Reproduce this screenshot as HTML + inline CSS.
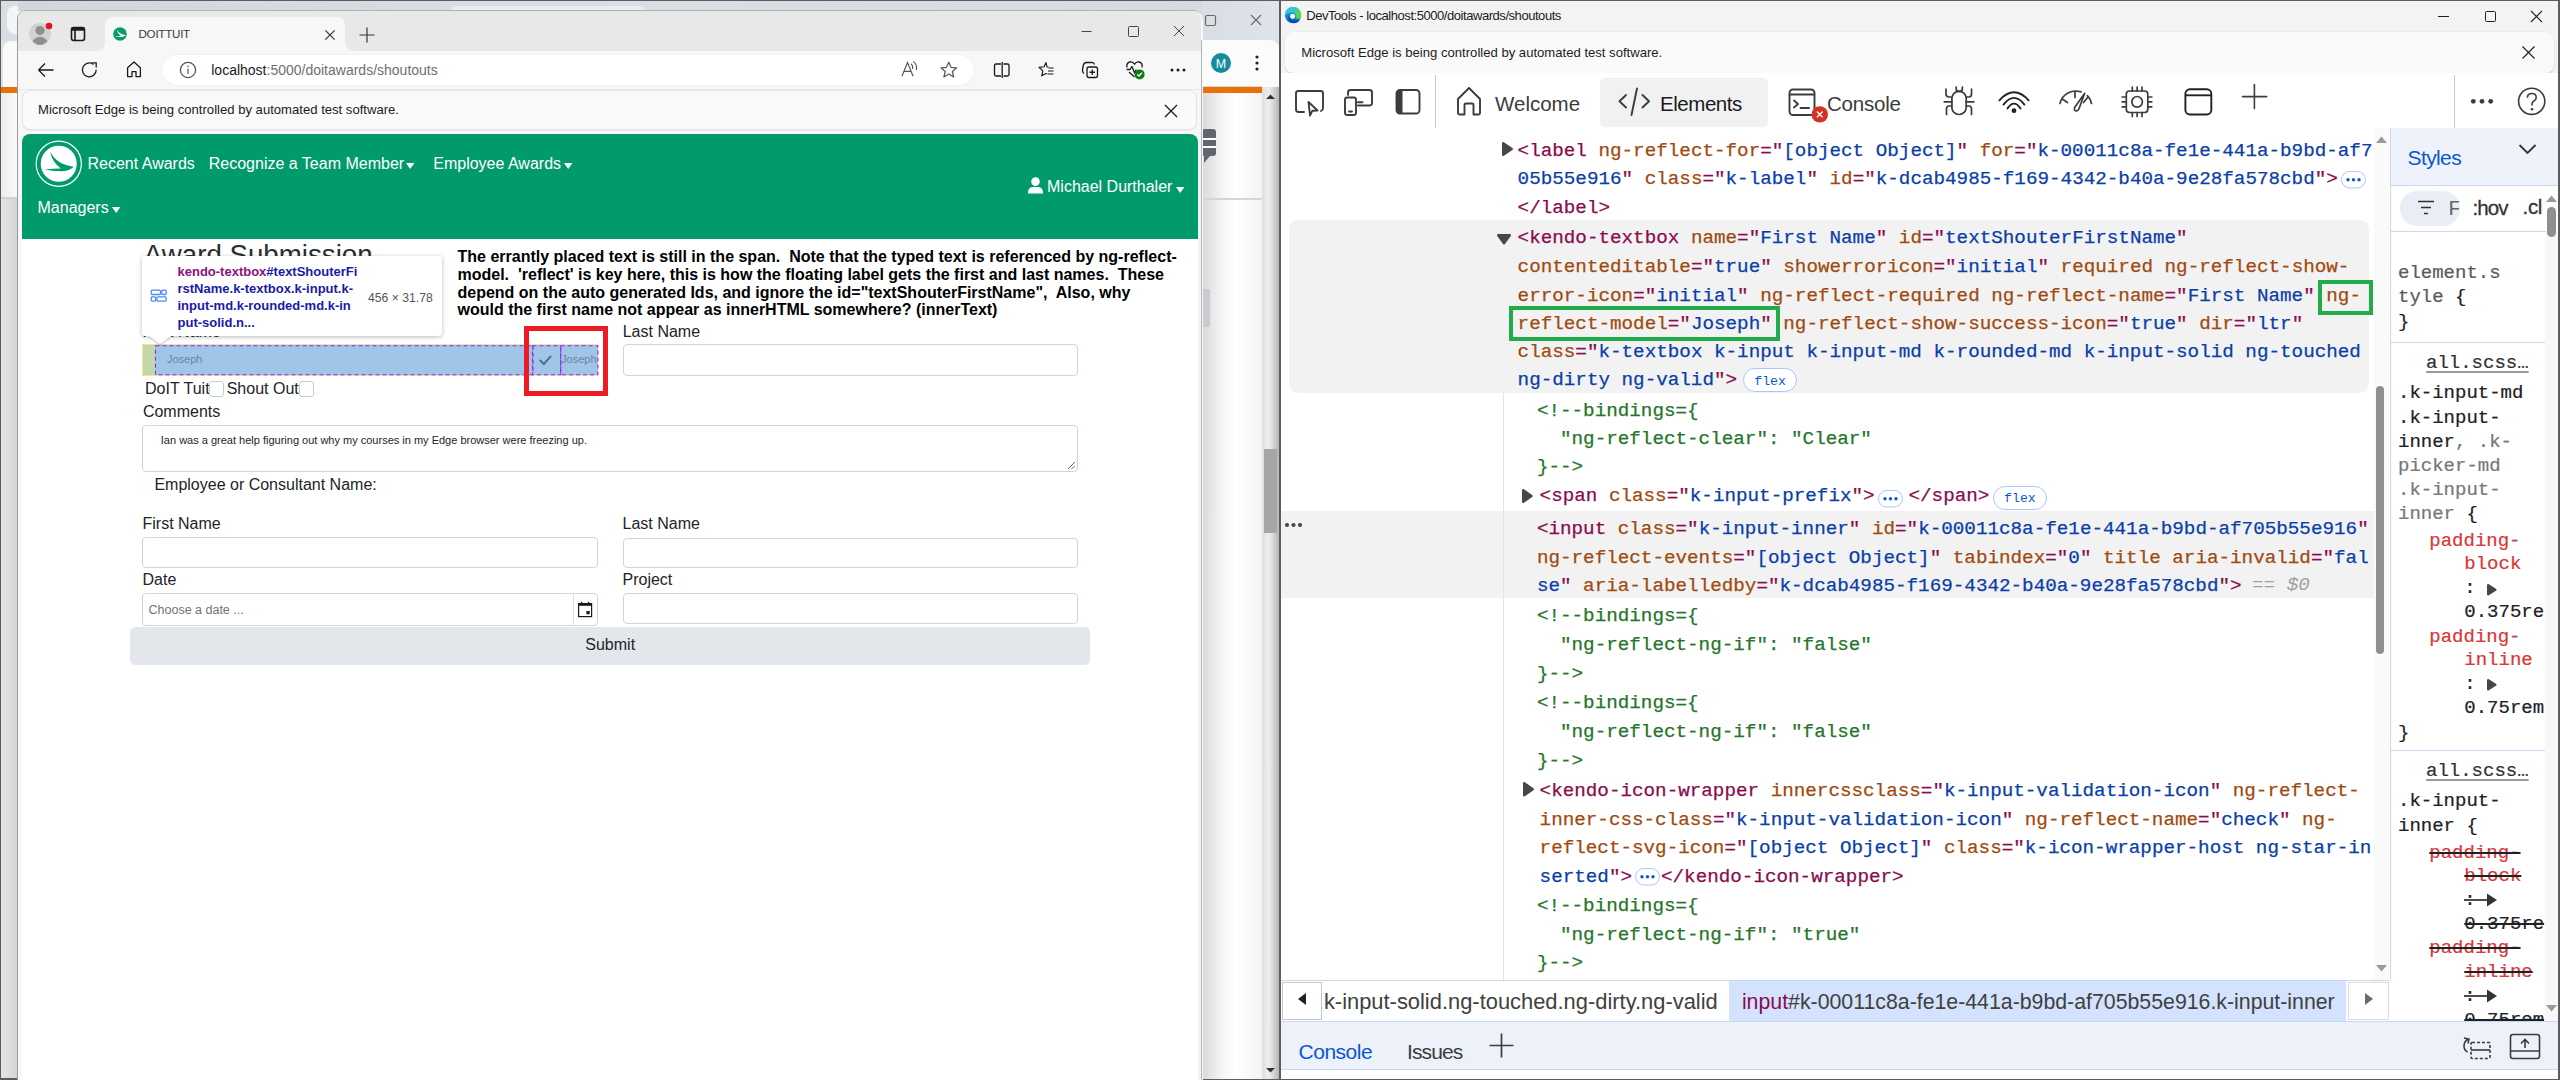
<!DOCTYPE html>
<html><head><meta charset="utf-8">
<style>
*{box-sizing:border-box;margin:0;padding:0}
html,body{width:2560px;height:1080px;overflow:hidden}
body{position:relative;background:#d9dde4;font-family:"Liberation Sans",sans-serif;color:#000}
.a{position:absolute}
.pre{white-space:pre}
svg.a{overflow:visible}
</style></head><body>
<div class="a" style="left:0px;top:0px;width:2560px;height:1px;background:#5c5c5c;"></div>
<div class="a" style="left:0px;top:0px;width:1px;height:1080px;background:#5c5c5c;"></div>
<div class="a" style="left:1px;top:1px;width:17px;height:1079px;background:linear-gradient(90deg,#e4e4e4,#d3d3d3);"></div>
<div class="a" style="left:1px;top:1px;width:17px;height:40px;background:#d9dde4;"></div>
<div class="a" style="left:7px;top:6px;width:30px;height:28px;background:#f3f4f6;border-radius:8px"></div>
<div class="a" style="left:3px;top:41px;width:20px;height:46px;background:#fafafa;border-radius:8px 0 0 0"></div>
<div class="a" style="left:1px;top:87px;width:17px;height:6px;background:#e8710a;"></div>
<div class="a" style="left:1px;top:93px;width:17px;height:104px;background:linear-gradient(90deg,#ececec,#fafafa);"></div>
<div class="a" style="left:1px;top:197px;width:17px;height:2px;background:#cfd3d8;"></div>
<div class="a" style="left:0px;top:1078px;width:18px;height:2px;background:#5c5c5c;"></div>
<div class="a" style="left:18px;top:1px;width:1262px;height:10px;background:linear-gradient(90deg,#d2d7df,#dadfe6 50%,#d5dae2);"></div>
<div class="a" style="left:451px;top:6px;width:194px;height:5px;background:#ececec;border-radius:5px 5px 0 0"></div>
<div class="a" style="left:1202px;top:1px;width:78px;height:40px;background:linear-gradient(90deg,#d9dde4,#dfe3ea);"></div>
<div class="a" style="left:1202px;top:40px;width:78px;height:47px;background:#fbfbfb;border-top-right-radius:10px"></div>
<div class="a" style="left:1202px;top:86px;width:60px;height:1px;background:#d9d9d9;"></div>
<div class="a" style="left:1202px;top:87px;width:60px;height:6px;background:#e8710a;"></div>
<div class="a" style="left:1202px;top:93px;width:60px;height:987px;background:linear-gradient(90deg,#d9d9d9 0%,#f6f6f6 35%,#ffffff 55%,#f3f3f3 100%);"></div>
<div class="a" style="left:1262px;top:87px;width:17px;height:993px;background:linear-gradient(90deg,#dedede 0%,#eeeeee 40%,#c9c9c9 80%,#b2b2b2 100%);"></div>
<div class="a" style="left:1264px;top:449px;width:13px;height:84px;background:#a6a6a6;"></div>
<div class="a" style="left:1202px;top:198px;width:60px;height:2px;background:#d2d5da;"></div>
<div class="a" style="left:1202px;top:289px;width:8px;height:38px;background:#c9ccd0;"></div>
<svg class="a" style="left:1202px;top:1px;" width="78" height="40" viewBox="0 0 78 40"><rect x="3.5" y="14.5" width="10" height="10" rx="1.5" fill="none" stroke="#6a6a6a" stroke-width="1.2"/><path d="M49 14 L59 24 M59 14 L49 24" stroke="#6a6a6a" stroke-width="1.2"/></svg>
<svg class="a" style="left:1202px;top:40px;" width="78" height="47" viewBox="0 0 78 47"><circle cx="19" cy="23" r="10" fill="#138d9e"/><text x="19" y="28" font-family="Liberation Sans" font-size="12.5" fill="#fff" text-anchor="middle">M</text><circle cx="55" cy="17" r="1.6" fill="#222"/><circle cx="55" cy="23" r="1.6" fill="#222"/><circle cx="55" cy="29" r="1.6" fill="#222"/></svg>
<svg class="a" style="left:1262px;top:87px;" width="17" height="20" viewBox="0 0 17 20"><path d="M4 12 L8.5 7.5 L13 12 Z" fill="#333"/></svg>
<svg class="a" style="left:1262px;top:1060px;" width="17" height="20" viewBox="0 0 17 20"><path d="M4 8 L8.5 12.5 L13 8 Z" fill="#333"/></svg>
<svg class="a" style="left:1202px;top:126px;" width="20" height="40" viewBox="0 0 20 40"><rect x="0" y="3" width="14" height="27" rx="3" fill="#5f6670"/><rect x="0" y="12" width="14" height="2" fill="#fff"/><rect x="0" y="20" width="14" height="2" fill="#fff"/><path d="M2 30 L2 37 L8 30 Z" fill="#5f6670"/></svg>
<div class="a" style="left:1279px;top:0px;width:2px;height:1080px;background:#5e5e5e;"></div>
<div class="a" style="left:1202px;top:1079px;width:78px;height:1px;background:#5e5e5e;"></div>
<div class="a" style="left:17px;top:9.5px;width:1186px;height:1070.5px;background:#f7f7f7;border-left:1px solid #9a9a9a;border-top:1px solid #aeb2b8;border-top-left-radius:9px;border-top-right-radius:9px"></div>
<div class="a" style="left:18px;top:11px;width:1183px;height:40px;background:#e8e8e8;border-top-left-radius:8px;border-top-right-radius:8px"></div>
<div class="a" style="left:105px;top:17px;width:240px;height:34px;background:#f7f7f7;border-radius:8px 8px 0 0"></div>
<svg class="a" style="left:95px;top:41px;" width="10" height="10" viewBox="0 0 10 10"><path d="M0 10 Q10 10 10 0 L10 10 Z" fill="#f7f7f7"/></svg>
<svg class="a" style="left:345px;top:41px;" width="10" height="10" viewBox="0 0 10 10"><path d="M10 10 Q0 10 0 0 L0 10 Z" fill="#f7f7f7"/></svg>
<svg class="a" style="left:26px;top:20px;" width="30" height="30" viewBox="0 0 30 30"><circle cx="14" cy="14" r="11" fill="#d2d2d2"/><circle cx="14" cy="10.5" r="4.6" fill="#8f8f8f"/><path d="M6.5 21 Q14 12.5 21.5 21 Q18 25 14 25 Q10 25 6.5 21 Z" fill="#8f8f8f"/><circle cx="23" cy="6" r="3.3" fill="#e81123"/></svg>
<svg class="a" style="left:70px;top:26px;" width="18" height="18" viewBox="0 0 18 18"><rect x="1.5" y="1.5" width="13" height="13" rx="2.2" fill="none" stroke="#1a1a1a" stroke-width="1.6"/><rect x="1.5" y="1.5" width="13" height="3.2" fill="#1a1a1a"/><rect x="4.2" y="3" width="1.6" height="11.5" fill="#1a1a1a"/></svg>
<svg class="a" style="left:112px;top:26px;" width="17" height="17" viewBox="0 0 17 17"><circle cx="8" cy="8" r="6.8" fill="#079a6b"/><path transform="translate(8,8) scale(0.4) translate(-24.75,-24.75)" d="M16.3 12.7 Q22.9 25.8 39.9 27.7 Q34 32.5 27 32.2 Q18 32 11 30.4 Q19 29.8 26.8 29.6 Q17.45 21.85 16.3 12.7 Z" fill="#fff"/></svg>
<div class="a pre" style="left:138.50px;top:27.94px;font:normal 11.6px/11.6px 'Liberation Sans';color:#3a3a3a;letter-spacing:-0.25px;">DOITTUIT</div>
<svg class="a" style="left:320px;top:25px;" width="20" height="20" viewBox="0 0 20 20"><path d="M5.3 5.3 L14.7 14.7 M14.7 5.3 L5.3 14.7" stroke="#333" stroke-width="1.2"/></svg>
<svg class="a" style="left:356px;top:24px;" width="22" height="22" viewBox="0 0 22 22"><path d="M11 3.5 V18.5 M3.5 11 H18.5" stroke="#333" stroke-width="1.2"/></svg>
<svg class="a" style="left:1075px;top:20px;" width="24" height="24" viewBox="0 0 24 24"><path d="M6.5 11.5 H16.5" stroke="#444" stroke-width="1"/></svg>
<svg class="a" style="left:1121px;top:20px;" width="24" height="24" viewBox="0 0 24 24"><rect x="7.5" y="6.5" width="10" height="10" rx="1" fill="none" stroke="#444" stroke-width="1"/></svg>
<svg class="a" style="left:1167px;top:20px;" width="24" height="24" viewBox="0 0 24 24"><path d="M7 6 L17 16 M17 6 L7 16" stroke="#444" stroke-width="1"/></svg>
<svg class="a" style="left:36px;top:60px;" width="20" height="20" viewBox="0 0 20 20"><path d="M2.5 10 H17.5 M2.5 10 L9 3.5 M2.5 10 L9 16.5" fill="none" stroke="#1a1a1a" stroke-width="1.3"/></svg>
<svg class="a" style="left:80px;top:60px;" width="20" height="20" viewBox="0 0 20 20"><path d="M16.2 9.8 A6.9 6.9 0 1 1 13.5 4.4" fill="none" stroke="#1a1a1a" stroke-width="1.3"/><path d="M11.5 2.8 L16.2 2.8 L16.2 7.6" fill="none" stroke="#1a1a1a" stroke-width="1.3"/></svg>
<svg class="a" style="left:124px;top:59px;" width="20" height="20" viewBox="0 0 20 20"><path d="M3.6 17.6 V8.8 L10 2.9 L16.4 8.8 V17.6 H12 V12.6 H8 V17.6 Z" fill="none" stroke="#1a1a1a" stroke-width="1.3" stroke-linejoin="round"/></svg>
<div class="a" style="left:162px;top:55px;width:812px;height:30px;background:#ffffff;border-radius:15px;box-shadow:0 0 0 0.5px #ececec"></div>
<svg class="a" style="left:177px;top:59px;" width="22" height="22" viewBox="0 0 22 22"><circle cx="11" cy="11" r="7.6" fill="none" stroke="#555" stroke-width="1.3"/><rect x="10.3" y="9.6" width="1.5" height="5.4" fill="#777"/><circle cx="11" cy="7.3" r="0.9" fill="#777"/></svg>
<div class="a pre" style="left:211.25px;top:63.10px;font:normal 14px/14px 'Liberation Sans';color:#000;"><span style="color:#1b1b1b">localhost</span><span style="color:#707070">:5000/doitawards/shoutouts</span></div>
<svg class="a" style="left:898px;top:58px;" width="24" height="22" viewBox="0 0 24 22"><path d="M3.9 18.2 L9.5 4.5 L15.1 18.2 M5.9 13.4 H13.1" fill="none" stroke="#555" stroke-width="1.15"/><path d="M12.8 5.6 Q15.3 7.6 14.6 11 M15.3 3.4 Q19.6 6.8 18.3 12" fill="none" stroke="#555" stroke-width="1.1"/></svg>
<svg class="a" style="left:938px;top:60px;" width="22" height="20" viewBox="0 0 22 20"><path d="M10.8 2.2 L13.1 7.3 L18.6 7.8 L14.4 11.5 L15.7 17 L10.8 14.1 L5.9 17 L7.2 11.5 L3 7.8 L8.5 7.3 Z" fill="none" stroke="#555" stroke-width="1.2" stroke-linejoin="round"/></svg>
<svg class="a" style="left:992px;top:60px;" width="20" height="20" viewBox="0 0 20 20"><path d="M9 4 H4 Q2.5 4 2.5 5.5 V14.5 Q2.5 16 4 16 H9 M11.5 4 H15.5 Q17 4 17 5.5 V14.5 Q17 16 15.5 16 H11.5" fill="none" stroke="#1a1a1a" stroke-width="1.3"/><path d="M10.2 2 V18" stroke="#1a1a1a" stroke-width="1.3"/></svg>
<svg class="a" style="left:1036px;top:60px;" width="20" height="20" viewBox="0 0 20 20"><path d="M12.6 7 L11 7 L10 2.5 L8.1 6.8 L3 7.4 L6.8 10.8 L5.8 15.8 L9.9 13.5 L10.8 14" fill="none" stroke="#1a1a1a" stroke-width="1.15" stroke-linejoin="round"/><path d="M12.5 8 H17.5 M12 11 H17.5 M11.5 14 H17.5" stroke="#1a1a1a" stroke-width="1.15"/></svg>
<svg class="a" style="left:1080px;top:60px;" width="20" height="20" viewBox="0 0 20 20"><path d="M4 13.5 Q2 12 2.6 9 L3.4 5 Q4 2.5 6.5 2.5 L12 2.4 Q14 2.5 14.5 4.5" fill="none" stroke="#1a1a1a" stroke-width="1.3"/><rect x="7" y="7" width="10.5" height="10.5" rx="2" fill="none" stroke="#1a1a1a" stroke-width="1.3"/><path d="M12.25 9.5 V15 M9.5 12.25 H15" stroke="#1a1a1a" stroke-width="1.3"/></svg>
<svg class="a" style="left:1124px;top:59px;" width="22" height="22" viewBox="0 0 22 22"><path d="M3 8.5 Q2 4 6 3 Q9 2.5 10.5 5.3 Q12 2.5 15 3 Q19 4 18 8.5 M2.5 10.5 H6 L8 7.5 L10.5 14 L12.3 10.5 M5 13 L10.5 18" fill="none" stroke="#1a1a1a" stroke-width="1.3" stroke-linejoin="round"/><circle cx="15.6" cy="15.4" r="5" fill="#107c10"/><path d="M13.3 15.5 L15 17 L18 13.8" fill="none" stroke="#fff" stroke-width="1.3"/></svg>
<svg class="a" style="left:1168px;top:64px;" width="20" height="12" viewBox="0 0 20 12"><circle cx="4" cy="6" r="1.5" fill="#1a1a1a"/><circle cx="10" cy="6" r="1.5" fill="#1a1a1a"/><circle cx="16" cy="6" r="1.5" fill="#1a1a1a"/></svg>
<div class="a" style="left:18px;top:89px;width:1183px;height:1px;background:#e9e9e9;"></div>
<div class="a" style="left:22px;top:89.5px;width:1175px;height:40.5px;background:#fafafa;border-radius:8px;border:1px solid #e4e4e4;box-shadow:0 1px 1px rgba(0,0,0,0.06)"></div>
<div class="a pre" style="left:38.00px;top:102.86px;font:normal 13.1px/13.1px 'Liberation Sans';color:#1c1c1c;">Microsoft Edge is being controlled by automated test software.</div>
<svg class="a" style="left:1160px;top:100px;" width="22" height="22" viewBox="0 0 22 22"><path d="M5 5 L17 17 M17 5 L5 17" stroke="#1a1a1a" stroke-width="1.3"/></svg>
<div class="a" style="left:1198px;top:130px;width:4px;height:950px;background:#f4f4f4;"></div>
<div class="a" style="left:1201px;top:40px;width:1px;height:1040px;background:#b5b5b5;"></div>
<div class="a" style="left:22px;top:134px;width:1176px;height:946px;background:#ffffff;border-top-left-radius:8px;border-top-right-radius:8px"></div>
<div class="a" style="left:22px;top:134px;width:1176px;height:105px;background:#019a6b;border-top-left-radius:8px;border-top-right-radius:8px"></div>
<svg class="a" style="left:34px;top:139px;" width="50" height="50" viewBox="0 0 50 50"><circle cx="24.75" cy="24.75" r="22.6" fill="none" stroke="#fff" stroke-width="1.2"/><circle cx="24.75" cy="24.75" r="18" fill="#fff"/><path d="M16.3 12.7 Q22.9 25.8 39.9 27.7 Q34 32.5 27 32.2 Q18 32 11 30.4 Q19 29.8 26.8 29.6 Q17.45 21.85 16.3 12.7 Z" fill="#019a6b"/></svg>
<div class="a pre" style="left:87.50px;top:155.60px;font:normal 16px/16px 'Liberation Sans';color:#ffffff;">Recent Awards</div>
<div class="a pre" style="left:208.75px;top:155.60px;font:normal 16px/16px 'Liberation Sans';color:#ffffff;">Recognize a Team Member</div>
<svg class="a" style="left:405.5px;top:163px;" width="9.4" height="7" viewBox="0 0 9.4 7"><path d="M0 0 H8.4 L4.2 6 Z" fill="#fff"/></svg>
<div class="a pre" style="left:433.25px;top:155.60px;font:normal 16px/16px 'Liberation Sans';color:#ffffff;">Employee Awards</div>
<svg class="a" style="left:563.75px;top:163px;" width="9.4" height="7" viewBox="0 0 9.4 7"><path d="M0 0 H8.4 L4.2 6 Z" fill="#fff"/></svg>
<svg class="a" style="left:1027px;top:177px;" width="18" height="18" viewBox="0 0 18 18"><circle cx="8.5" cy="4.6" r="4.3" fill="#fff"/><path d="M1 16.5 Q1 10 5.5 10 H11.5 Q16 10 16 16.5 Z" fill="#fff"/></svg>
<div class="a pre" style="left:1047.00px;top:179.00px;font:normal 16px/16px 'Liberation Sans';color:#ffffff;">Michael Durthaler</div>
<svg class="a" style="left:1175.5px;top:186.5px;" width="9.4" height="7" viewBox="0 0 9.4 7"><path d="M0 0 H8.4 L4.2 6 Z" fill="#fff"/></svg>
<div class="a pre" style="left:37.50px;top:200.20px;font:normal 16px/16px 'Liberation Sans';color:#ffffff;">Managers</div>
<svg class="a" style="left:112.2px;top:207px;" width="9.4" height="7" viewBox="0 0 9.4 7"><path d="M0 0 H8.4 L4.2 6 Z" fill="#fff"/></svg>
<div class="a pre" style="left:143.80px;top:240.96px;font:normal 27.7px/27.7px 'Liberation Sans';color:#2a2d31;">Award Submission</div>
<div class="a pre" style="left:457.50px;top:249.40px;font:bold 16px/16px 'Liberation Sans';color:#000;">The errantly placed text is still in the span.  Note that the typed text is referenced by ng-reflect-</div>
<div class="a pre" style="left:457.50px;top:267.00px;font:bold 16px/16px 'Liberation Sans';color:#000;">model.  'reflect' is key here, this is how the floating label gets the first and last names.  These</div>
<div class="a pre" style="left:457.50px;top:284.60px;font:bold 16px/16px 'Liberation Sans';color:#000;">depend on the auto generated Ids, and ignore the id="textShouterFirstName",  Also, why</div>
<div class="a pre" style="left:457.50px;top:302.20px;font:bold 16px/16px 'Liberation Sans';color:#000;">would the first name not appear as innerHTML somewhere? (innerText)</div>
<div class="a pre" style="left:142.50px;top:323.60px;font:normal 16px/16px 'Liberation Sans';color:#212529;">First Name</div>
<div class="a pre" style="left:622.70px;top:323.60px;font:normal 16px/16px 'Liberation Sans';color:#212529;">Last Name</div>
<div class="a" style="left:142px;top:344px;width:456px;height:32px;background:#f7dfa6;"></div>
<div class="a" style="left:143px;top:345px;width:12px;height:30px;background:#c2d8a8;"></div>
<div class="a" style="left:155px;top:345px;width:443px;height:30px;background:#a1c5e8;"></div>
<svg class="a" style="left:154px;top:344px;" width="446" height="33" viewBox="0 0 446 33"><rect x="1.5" y="1.8" width="377.5" height="29" stroke="#8a2be2" stroke-width="1.1" stroke-dasharray="4 3" fill="none"/><rect x="378.5" y="1.8" width="28.2" height="29" stroke="#8a2be2" stroke-width="1.1" stroke-dasharray="4 3" fill="none"/><rect x="406.7" y="1.8" width="37.2" height="29" stroke="#8a2be2" stroke-width="1.1" stroke-dasharray="4 3" fill="none"/></svg>
<div class="a pre" style="left:167.00px;top:354.25px;font:normal 11px/11px 'Liberation Sans';color:#6785a6;">Joseph</div>
<svg class="a" style="left:537px;top:352px;" width="18" height="16" viewBox="0 0 18 16"><path d="M2.8 8 L6.8 12 L14.2 3.8" fill="none" stroke="#4d6f8f" stroke-width="2"/></svg>
<div class="a" style="left:560.6px;top:345px;width:37px;height:30px;overflow:hidden"><div class="a pre" style="left:0.50px;top:9.25px;font:normal 11px/11px 'Liberation Sans';color:#6785a6;">Joseph</div>
</div>
<div class="a" style="left:622.5px;top:344.3px;width:455.5px;height:31.4px;background:#fff;border:1px solid #cfd4da;border-radius:4px"></div>
<div class="a" style="left:524px;top:326px;width:84px;height:70px;background:transparent;border:5px solid #ed1c24"></div>
<div class="a pre" style="left:145.00px;top:380.60px;font:normal 16px/16px 'Liberation Sans';color:#212529;">DoIT Tuit</div>
<div class="a" style="left:208.6px;top:381.3px;width:15.2px;height:15.4px;background:#fff;border:1px solid #c5cbd3;border-radius:3px"></div>
<div class="a pre" style="left:226.70px;top:380.60px;font:normal 16px/16px 'Liberation Sans';color:#212529;">Shout Out</div>
<div class="a" style="left:298.6px;top:381.3px;width:15.2px;height:15.4px;background:#fff;border:1px solid #c5cbd3;border-radius:3px"></div>
<div class="a pre" style="left:142.90px;top:403.60px;font:normal 16px/16px 'Liberation Sans';color:#212529;">Comments</div>
<div class="a" style="left:142.2px;top:425.2px;width:935.8px;height:47.3px;background:#fff;border:1px solid #cfd4da;border-radius:4px"></div>
<div class="a pre" style="left:160.80px;top:434.85px;font:normal 11px/11px 'Liberation Sans';color:#212529;">Ian was a great help figuring out why my courses in my Edge browser were freezing up.</div>
<svg class="a" style="left:1066px;top:460px;" width="10" height="10" viewBox="0 0 10 10"><path d="M9 2 L2 9 M9 5.5 L5.5 9" stroke="#555" stroke-width="0.9"/></svg>
<div class="a pre" style="left:154.40px;top:476.60px;font:normal 16px/16px 'Liberation Sans';color:#212529;">Employee or Consultant Name:</div>
<div class="a pre" style="left:142.50px;top:516.00px;font:normal 16px/16px 'Liberation Sans';color:#212529;">First Name</div>
<div class="a pre" style="left:622.50px;top:516.00px;font:normal 16px/16px 'Liberation Sans';color:#212529;">Last Name</div>
<div class="a" style="left:142px;top:537px;width:456px;height:31px;background:#fff;border:1px solid #cfd4da;border-radius:4px"></div>
<div class="a" style="left:622.5px;top:537.5px;width:455.5px;height:30px;background:#fff;border:1px solid #cfd4da;border-radius:4px"></div>
<div class="a pre" style="left:142.50px;top:571.60px;font:normal 16px/16px 'Liberation Sans';color:#212529;">Date</div>
<div class="a pre" style="left:622.50px;top:571.60px;font:normal 16px/16px 'Liberation Sans';color:#212529;">Project</div>
<div class="a" style="left:142px;top:592.5px;width:456px;height:33.5px;background:#fff;border:1px solid #cfd4da;border-radius:4px"></div>
<div class="a" style="left:572.5px;top:593.5px;width:1px;height:31.5px;background:#dde1e6;"></div>
<svg class="a" style="left:576px;top:600px;" width="18" height="19" viewBox="0 0 18 19"><rect x="2.6" y="3.6" width="13" height="13" fill="none" stroke="#1a1a1a" stroke-width="1.2"/><rect x="2.6" y="3.6" width="13" height="2.2" fill="#1a1a1a"/><rect x="5" y="1.8" width="1.3" height="3" fill="#1a1a1a"/><rect x="11.9" y="1.8" width="1.3" height="3" fill="#1a1a1a"/><rect x="10.4" y="11" width="3.3" height="3.3" fill="#1a1a1a"/></svg>
<div class="a pre" style="left:148.50px;top:603.58px;font:normal 12.5px/12.5px 'Liberation Sans';color:#6c757d;">Choose a date ...</div>
<div class="a" style="left:622.5px;top:592.5px;width:455.5px;height:31.2px;background:#fff;border:1px solid #cfd4da;border-radius:4px"></div>
<div class="a" style="left:130px;top:627.2px;width:960px;height:37.5px;background:#e3e6ea;border-radius:5px"></div>
<div class="a pre" style="left:585.30px;top:637.40px;font:normal 16px/16px 'Liberation Sans';color:#212529;">Submit</div>
<div class="a" style="left:142px;top:256px;width:300px;height:80px;background:#fff;border-radius:3px;box-shadow:0 1px 4px rgba(0,0,0,0.28)"></div>
<svg class="a" style="left:146px;top:334px;" width="30" height="12" viewBox="0 0 30 12"><path d="M3 2 L14 10 L25 2 Z" fill="#fff" style="filter:drop-shadow(0 1px 1px rgba(0,0,0,0.25))"/><rect x="0" y="0" width="30" height="2.2" fill="#fff"/></svg>
<svg class="a" style="left:149px;top:288px;" width="20" height="16" viewBox="0 0 20 16"><rect x="2.2" y="2.2" width="9.3" height="4.3" rx="1" fill="none" stroke="#4a8af4" stroke-width="1.3"/><rect x="12.8" y="2.2" width="4.4" height="4.3" rx="1" fill="none" stroke="#4a8af4" stroke-width="1.3"/><rect x="2.2" y="8.8" width="4.4" height="4.3" rx="1" fill="none" stroke="#4a8af4" stroke-width="1.3"/><rect x="7.9" y="8.8" width="9.3" height="4.3" rx="1" fill="none" stroke="#4a8af4" stroke-width="1.3"/></svg>
<div class="a pre" style="left:177.50px;top:264.75px;font:bold 13px/13px 'Liberation Sans';color:#1a1aa6;"><span style="color:#881280">kendo-textbox</span>#textShouterFi</div>
<div class="a pre" style="left:177.50px;top:281.95px;font:bold 13px/13px 'Liberation Sans';color:#1a1aa6;">rstName.k-textbox.k-input.k-</div>
<div class="a pre" style="left:177.50px;top:298.95px;font:bold 13px/13px 'Liberation Sans';color:#1a1aa6;">input-md.k-rounded-md.k-in</div>
<div class="a pre" style="left:177.50px;top:315.95px;font:bold 13px/13px 'Liberation Sans';color:#1a1aa6;">put-solid.n...</div>
<div class="a pre" style="left:368.00px;top:291.83px;font:normal 12.2px/12.2px 'Liberation Sans';color:#555;">456 × 31.78</div>
<div class="a" style="left:1281px;top:1px;width:1279px;height:1079px;background:#ffffff;"></div>
<div class="a" style="left:1281px;top:1px;width:1277px;height:31px;background:#f3f3f3;"></div>
<div class="a" style="left:1281px;top:31px;width:1277px;height:42px;background:#f3f3f3;"></div>
<div class="a" style="left:2558px;top:0px;width:2px;height:1080px;background:#5c5c5c;"></div>
<svg class="a" style="left:1284px;top:6px;" width="18" height="18" viewBox="0 0 18 18"><defs><linearGradient id="eg1" x1="0" y1="0" x2="1" y2="0.3"><stop offset="0" stop-color="#33c3f6"/><stop offset="0.55" stop-color="#2ec7c4"/><stop offset="1" stop-color="#55db48"/></linearGradient><linearGradient id="eg3" x1="0" y1="0" x2="0.3" y2="1"><stop offset="0" stop-color="#1e9ce8"/><stop offset="1" stop-color="#0a6fd0"/></linearGradient></defs><circle cx="9" cy="9.2" r="8.1" fill="url(#eg3)"/><path d="M1 8.5 Q1.8 1.1 9 1.1 Q16.8 1.1 17.1 9 Q17.1 12.6 14.2 12.9 Q11.6 13 11.6 10.2 Q11.7 6.4 8.3 6.4 Q3.8 6.5 1 9.2 Z" fill="url(#eg1)"/><path d="M5.6 8.6 Q5.2 14.2 11 14.6 Q14.3 14.8 16.2 13.6 Q14.3 17.2 9.6 17.3 Q6.2 17.2 4.6 14.3 Q3.6 11.2 5.6 8.6 Z" fill="#0b4aa2"/><circle cx="8.5" cy="10.2" r="2.5" fill="#fff"/></svg>
<div class="a pre" style="left:1306.25px;top:9.45px;font:normal 13px/13px 'Liberation Sans';color:#1b1b1b;letter-spacing:-0.45px">DevTools - localhost:5000/doitawards/shoutouts</div>
<div class="a" style="left:2437.5px;top:15.5px;width:11.5px;height:1.1px;background:#222;"></div>
<div class="a" style="left:2485px;top:11px;width:10.5px;height:10.5px;background:transparent;border:1.1px solid #222;border-radius:1.5px"></div>
<svg class="a" style="left:2529px;top:9px;" width="16" height="16" viewBox="0 0 16 16"><path d="M2 2 L13 13 M13 2 L2 13" stroke="#222" stroke-width="1.1"/></svg>
<div class="a" style="left:1284.5px;top:32px;width:1269.5px;height:40.5px;background:#fafafa;border-radius:8px;box-shadow:0 1px 1px rgba(0,0,0,0.12),0 0 0 0.6px #e6e6e6"></div>
<div class="a pre" style="left:1301.25px;top:45.87px;font:normal 13.1px/13.1px 'Liberation Sans';color:#1c1c1c;">Microsoft Edge is being controlled by automated test software.</div>
<svg class="a" style="left:2520px;top:44px;" width="18" height="18" viewBox="0 0 18 18"><path d="M2.5 2.5 L14.5 14.5 M14.5 2.5 L2.5 14.5" stroke="#222" stroke-width="1.2"/></svg>
<div class="a" style="left:1281px;top:73px;width:1277px;height:55px;background:#ffffff;"></div>
<svg class="a" style="left:1294px;top:88px;" width="32" height="30" viewBox="0 0 32 30"><path d="M10 24 H4.5 Q2 24 2 21.5 V5 Q2 3 4.5 3 H26.5 Q29 3 29 5 V20 Q29 22 27 23" fill="none" stroke="#3c3c3c" stroke-width="1.9" stroke-linejoin="round" stroke-linecap="round"/><path d="M14.5 14 L16 27.5 L18.3 22.8 L23.5 22.5 Z" fill="none" stroke="#3c3c3c" stroke-width="1.9" stroke-linejoin="round" stroke-linecap="round"/></svg>
<svg class="a" style="left:1343px;top:87px;" width="32" height="30" viewBox="0 0 32 30"><path d="M5 8 V5.5 Q5 3 7.5 3 H26.5 Q29 3 29 5.5 V16 Q29 18.5 26.5 18.5 H15" fill="none" stroke="#3c3c3c" stroke-width="1.9" stroke-linejoin="round" stroke-linecap="round"/><rect x="2" y="10.5" width="11" height="17.5" rx="2.2" fill="none" stroke="#3c3c3c" stroke-width="1.9" stroke-linejoin="round" stroke-linecap="round"/><path d="M6 24.5 H9 M15 15.3 H19.5" fill="none" stroke="#3c3c3c" stroke-width="1.9" stroke-linejoin="round" stroke-linecap="round"/></svg>
<svg class="a" style="left:1394px;top:87px;" width="28" height="29" viewBox="0 0 28 29"><rect x="2.5" y="3" width="23" height="23.5" rx="3.5" fill="none" stroke="#3c3c3c" stroke-width="1.9" stroke-linejoin="round" stroke-linecap="round"/><path d="M3 5 Q3 3.5 5 3.5 H8.5 V26 H5 Q3 26 3 24 Z" fill="#3c3c3c"/></svg>
<div class="a" style="left:1434.5px;top:74.5px;width:1.5px;height:53px;background:#c4c7cc;"></div>
<svg class="a" style="left:1455px;top:85px;" width="31" height="32" viewBox="0 0 31 32"><path d="M3 14 L14 3 L25 14 V28 Q25 29.5 23.5 29.5 H18.5 V20 Q18.5 18.5 17 18.5 H11 Q9.5 18.5 9.5 20 V29.5 H4.5 Q3 29.5 3 28 Z" fill="none" stroke="#3c3c3c" stroke-width="1.9" stroke-linejoin="round" stroke-linecap="round"/></svg>
<div class="a pre" style="left:1495.00px;top:93.78px;font:normal 20.5px/20.5px 'Liberation Sans';color:#3b3b3b;">Welcome</div>
<div class="a" style="left:1600.25px;top:78px;width:167.75px;height:48.5px;background:#f0f1f3;border-radius:5px"></div>
<svg class="a" style="left:1616px;top:86px;" width="36" height="32" viewBox="0 0 36 32"><path d="M10 9 L3.5 15.3 L10 21.5 M26.5 9 L33 15.3 L26.5 21.5 M21 2.5 L15.5 29" fill="none" stroke="#3c3c3c" stroke-width="1.9" stroke-linejoin="round" stroke-linecap="round"/></svg>
<div class="a pre" style="left:1660.00px;top:93.78px;font:normal 20.5px/20.5px 'Liberation Sans';color:#1b1b1b;letter-spacing:-0.45px;">Elements</div>
<svg class="a" style="left:1787px;top:87px;" width="32" height="31" viewBox="0 0 32 31"><rect x="2.5" y="2.5" width="25" height="25.5" rx="3.5" fill="none" stroke="#3c3c3c" stroke-width="1.9" stroke-linejoin="round" stroke-linecap="round"/><path d="M3 7.5 H27 M7 13.5 L11 17 L7 20.5 M13.5 21 H22" fill="none" stroke="#3c3c3c" stroke-width="1.9" stroke-linejoin="round" stroke-linecap="round"/></svg>
<svg class="a" style="left:1810px;top:105px;" width="20" height="20" viewBox="0 0 20 20"><circle cx="9.8" cy="9.4" r="8.2" fill="#d93025"/><path d="M7 6.6 L12.6 12.2 M12.6 6.6 L7 12.2" stroke="#fff" stroke-width="1.4"/></svg>
<div class="a pre" style="left:1826.90px;top:93.78px;font:normal 20.5px/20.5px 'Liberation Sans';color:#3b3b3b;letter-spacing:-0.2px;">Console</div>
<svg class="a" style="left:1941px;top:84px;" width="36" height="34" viewBox="0 0 36 34"><rect x="10.9" y="7.3" width="14.3" height="23.2" rx="7" fill="none" stroke="#3c3c3c" stroke-width="1.7" stroke-linejoin="round" stroke-linecap="round"/><path d="M15.2 3 V5 Q15.2 7.3 18 7.3 Q21.4 7.3 21.4 5 V3 M10.9 13 H8 Q5 13 5 10 V5 M25.2 13 H28 Q30.5 13 30.5 10 V5 M3.3 17.9 H10.9 M25.2 17.9 H32.8 M10.9 22 H8 Q5.5 22 5.5 25 V30.5 M25.2 22 H28 Q30.5 22 30.5 25 V30.5" fill="none" stroke="#3c3c3c" stroke-width="1.7" stroke-linejoin="round" stroke-linecap="round"/></svg>
<svg class="a" style="left:1996px;top:88px;" width="36" height="28" viewBox="0 0 36 28"><path d="M3.4 12.3 Q18 -3.7 32.6 12.3 M7.5 16.6 Q18 3.2 28.4 16.6 M11.5 20.4 Q18 10.8 24.5 20.4" fill="none" stroke="#222" stroke-width="1.9" stroke-linecap="round"/><circle cx="18" cy="22.7" r="2.4" fill="#222"/></svg>
<svg class="a" style="left:2057px;top:86px;" width="38" height="28" viewBox="0 0 38 28"><path d="M3 17.5 A16.26 16.26 0 0 1 24 5.9 M30.4 9.6 A16.26 16.26 0 0 1 34.5 17.5 M6 13.5 L10.5 16.5 M18 6 V11.5 M31 11 L26.5 16.5" fill="none" stroke="#3c3c3c" stroke-width="1.7" stroke-linejoin="round" stroke-linecap="round"/><path d="M27.7 7.3 L17.8 21.3 Q16.6 24.3 18.9 24.9 Q21 25.4 22 22.8 Z" fill="none" stroke="#3c3c3c" stroke-width="1.7" stroke-linejoin="round" stroke-linecap="round"/></svg>
<svg class="a" style="left:2120px;top:85px;" width="36" height="34" viewBox="0 0 36 34"><rect x="6.3" y="6" width="21.5" height="21.5" rx="3.2" fill="none" stroke="#3c3c3c" stroke-width="1.7" stroke-linejoin="round" stroke-linecap="round"/><circle cx="17.1" cy="16.8" r="5.3" fill="none" stroke="#3c3c3c" stroke-width="1.7" stroke-linejoin="round" stroke-linecap="round"/><path d="M12.3 2.2 V6 M17.1 2.2 V6 M22 2.2 V6 M12.3 27.5 V31.5 M17.1 27.5 V31.5 M22 27.5 V31.5 M2.2 12 H6.3 M2.2 16.8 H6.3 M2.2 21.8 H6.3 M27.8 12 H31.8 M27.8 16.8 H31.8 M27.8 21.8 H31.8" fill="none" stroke="#3c3c3c" stroke-width="1.7" stroke-linejoin="round" stroke-linecap="round"/></svg>
<svg class="a" style="left:2183px;top:86px;" width="30" height="31" viewBox="0 0 30 31"><rect x="2.4" y="3.3" width="25.9" height="25.2" rx="4.5" fill="none" stroke="#222" stroke-width="1.9"/><path d="M2.4 9.3 H28.3" stroke="#222" stroke-width="1.9"/></svg>
<svg class="a" style="left:2240px;top:83px;" width="30" height="28" viewBox="0 0 30 28"><path d="M14.4 1.6 V25.6 M2.5 13.6 H26.7" fill="none" stroke="#3c3c3c" stroke-width="1.6" stroke-linecap="round"/></svg>
<div class="a" style="left:2453.5px;top:74.5px;width:1.5px;height:53px;background:#c4c7cc;"></div>
<svg class="a" style="left:2469px;top:96px;" width="28" height="12" viewBox="0 0 28 12"><circle cx="4.3" cy="5.3" r="2.4" fill="#3c3c3c"/><circle cx="13" cy="5.3" r="2.4" fill="#3c3c3c"/><circle cx="21.7" cy="5.3" r="2.4" fill="#3c3c3c"/></svg>
<svg class="a" style="left:2516px;top:86px;" width="32" height="32" viewBox="0 0 32 32"><circle cx="15.7" cy="15.3" r="13.1" fill="none" stroke="#3c3c3c" stroke-width="1.6"/><path d="M11.4 11.7 Q11.5 7.5 15.8 7.5 Q20.2 7.5 20.2 11.4 Q20.2 13.8 17.8 15 Q16 16 16 18.5 V19.5" fill="none" stroke="#3c3c3c" stroke-width="1.6"/><circle cx="16" cy="23.3" r="1.3" fill="#3c3c3c"/></svg>
<div class="a" style="left:1288.75px;top:220px;width:1080px;height:172.5px;background:#f2f2f2;border-radius:9px"></div>
<div class="a" style="left:1281px;top:511px;width:1093px;height:87px;background:#f2f2f2;"></div>
<div class="a" style="left:1503px;top:392.5px;width:1px;height:587px;background:#e3e3e3;"></div>
<svg class="a" style="left:1501.5px;top:142px;" width="11" height="14" viewBox="0 0 11 14"><path d="M1.2 1.2 L9.8 7.0 L1.2 12.8 Z" fill="#474747" stroke="#474747" stroke-width="2.4" stroke-linejoin="round"/></svg>
<svg class="a" style="left:1497.4px;top:233.7px;" width="14" height="10.5" viewBox="0 0 14 10.5"><path d="M1.2 1.2 L12.8 1.2 L7.0 9.3 Z" fill="#474747" stroke="#474747" stroke-width="2.4" stroke-linejoin="round"/></svg>
<svg class="a" style="left:1522.3px;top:489.2px;" width="10.7" height="14" viewBox="0 0 10.7 14"><path d="M1.2 1.2 L9.5 7.0 L1.2 12.8 Z" fill="#474747" stroke="#474747" stroke-width="2.4" stroke-linejoin="round"/></svg>
<svg class="a" style="left:1522.5px;top:781.6px;" width="11" height="14.4" viewBox="0 0 11 14.4"><path d="M1.2 1.2 L9.8 7.2 L1.2 13.200000000000001 Z" fill="#474747" stroke="#474747" stroke-width="2.4" stroke-linejoin="round"/></svg>
<div class="a pre" style="left:1517.60px;top:141.67px;font:normal 19.25px/19.25px 'Liberation Mono';color:#000;-webkit-text-stroke:0.25px currentColor"><span style="color:#8a0b4e">&lt;label </span><span style="color:#9f4a10">ng-reflect-for</span><span style="color:#8a0b4e">="</span><span style="color:#0a3ea8">[object Object]</span><span style="color:#8a0b4e">" </span><span style="color:#9f4a10">for</span><span style="color:#8a0b4e">="</span><span style="color:#0a3ea8">k-00011c8a-fe1e-441a-b9bd-af7</span></div>
<div class="a pre" style="left:1517.60px;top:170.37px;font:normal 19.25px/19.25px 'Liberation Mono';color:#000;-webkit-text-stroke:0.25px currentColor"><span style="color:#0a3ea8">05b55e916</span><span style="color:#8a0b4e">" </span><span style="color:#9f4a10">class</span><span style="color:#8a0b4e">="</span><span style="color:#0a3ea8">k-label</span><span style="color:#8a0b4e">" </span><span style="color:#9f4a10">id</span><span style="color:#8a0b4e">="</span><span style="color:#0a3ea8">k-dcab4985-f169-4342-b40a-9e28fa578cbd</span><span style="color:#8a0b4e">"&gt;</span></div>
<svg class="a" style="left:2341px;top:171px;" width="25" height="17.5" viewBox="0 0 25 17.5"><rect x="0.5" y="0.5" width="24" height="16.5" rx="8.25" fill="#fff" stroke="#a8c7fa" stroke-width="1"/><circle cx="7.0" cy="8.75" r="1.7" fill="#0b57d0"/><circle cx="12.5" cy="8.75" r="1.7" fill="#0b57d0"/><circle cx="18.0" cy="8.75" r="1.7" fill="#0b57d0"/></svg>
<div class="a pre" style="left:1517.60px;top:199.07px;font:normal 19.25px/19.25px 'Liberation Mono';color:#000;-webkit-text-stroke:0.25px currentColor"><span style="color:#8a0b4e">&lt;/label&gt;</span></div>
<div class="a pre" style="left:1517.60px;top:228.67px;font:normal 19.25px/19.25px 'Liberation Mono';color:#000;-webkit-text-stroke:0.25px currentColor"><span style="color:#8a0b4e">&lt;kendo-textbox </span><span style="color:#9f4a10">name</span><span style="color:#8a0b4e">="</span><span style="color:#0a3ea8">First Name</span><span style="color:#8a0b4e">" </span><span style="color:#9f4a10">id</span><span style="color:#8a0b4e">="</span><span style="color:#0a3ea8">textShouterFirstName</span><span style="color:#8a0b4e">"</span></div>
<div class="a pre" style="left:1517.60px;top:258.17px;font:normal 19.25px/19.25px 'Liberation Mono';color:#000;-webkit-text-stroke:0.25px currentColor"><span style="color:#9f4a10">contenteditable</span><span style="color:#8a0b4e">="</span><span style="color:#0a3ea8">true</span><span style="color:#8a0b4e">" </span><span style="color:#9f4a10">showerroricon</span><span style="color:#8a0b4e">="</span><span style="color:#0a3ea8">initial</span><span style="color:#8a0b4e">" </span><span style="color:#9f4a10">required ng-reflect-show-</span></div>
<div class="a pre" style="left:1517.60px;top:286.57px;font:normal 19.25px/19.25px 'Liberation Mono';color:#000;-webkit-text-stroke:0.25px currentColor"><span style="color:#9f4a10">error-icon</span><span style="color:#8a0b4e">="</span><span style="color:#0a3ea8">initial</span><span style="color:#8a0b4e">" </span><span style="color:#9f4a10">ng-reflect-required ng-reflect-name</span><span style="color:#8a0b4e">="</span><span style="color:#0a3ea8">First Name</span><span style="color:#8a0b4e">" </span><span style="color:#9f4a10">ng-</span></div>
<div class="a pre" style="left:1517.60px;top:314.97px;font:normal 19.25px/19.25px 'Liberation Mono';color:#000;-webkit-text-stroke:0.25px currentColor"><span style="color:#9f4a10">reflect-model</span><span style="color:#8a0b4e">="</span><span style="color:#0a3ea8">Joseph</span><span style="color:#8a0b4e">" </span><span style="color:#9f4a10">ng-reflect-show-success-icon</span><span style="color:#8a0b4e">="</span><span style="color:#0a3ea8">true</span><span style="color:#8a0b4e">" </span><span style="color:#9f4a10">dir</span><span style="color:#8a0b4e">="</span><span style="color:#0a3ea8">ltr</span><span style="color:#8a0b4e">"</span></div>
<div class="a pre" style="left:1517.60px;top:343.07px;font:normal 19.25px/19.25px 'Liberation Mono';color:#000;-webkit-text-stroke:0.25px currentColor"><span style="color:#9f4a10">class</span><span style="color:#8a0b4e">="</span><span style="color:#0a3ea8">k-textbox k-input k-input-md k-rounded-md k-input-solid ng-touched</span></div>
<div class="a pre" style="left:1517.60px;top:371.47px;font:normal 19.25px/19.25px 'Liberation Mono';color:#000;-webkit-text-stroke:0.25px currentColor"><span style="color:#0a3ea8">ng-dirty ng-valid</span><span style="color:#8a0b4e">"&gt;</span></div>
<div class="a" style="left:1742.7px;top:368.3px;width:54.3px;height:24px;background:#fff;border:1px solid #a8c7fa;border-radius:12.0px"></div>
<div class="a pre" style="left:1754.30px;top:375.27px;font:normal 13.2px/13.2px 'Liberation Mono';color:#0b57d0;">flex</div>
<div class="a pre" style="left:1536.90px;top:402.07px;font:normal 19.25px/19.25px 'Liberation Mono';color:#000;-webkit-text-stroke:0.25px currentColor"><span style="color:#25752b">&lt;!--bindings={</span></div>
<div class="a pre" style="left:1536.90px;top:430.07px;font:normal 19.25px/19.25px 'Liberation Mono';color:#000;-webkit-text-stroke:0.25px currentColor"><span style="color:#25752b">  "ng-reflect-clear": "Clear"</span></div>
<div class="a pre" style="left:1536.90px;top:457.67px;font:normal 19.25px/19.25px 'Liberation Mono';color:#000;-webkit-text-stroke:0.25px currentColor"><span style="color:#25752b">}--&gt;</span></div>
<div class="a pre" style="left:1539.60px;top:487.17px;font:normal 19.25px/19.25px 'Liberation Mono';color:#000;-webkit-text-stroke:0.25px currentColor"><span style="color:#8a0b4e">&lt;span </span><span style="color:#9f4a10">class</span><span style="color:#8a0b4e">="</span><span style="color:#0a3ea8">k-input-prefix</span><span style="color:#8a0b4e">"&gt;</span></div>
<svg class="a" style="left:1878px;top:489.5px;" width="25" height="17.5" viewBox="0 0 25 17.5"><rect x="0.5" y="0.5" width="24" height="16.5" rx="8.25" fill="#fff" stroke="#a8c7fa" stroke-width="1"/><circle cx="7.0" cy="8.75" r="1.7" fill="#0b57d0"/><circle cx="12.5" cy="8.75" r="1.7" fill="#0b57d0"/><circle cx="18.0" cy="8.75" r="1.7" fill="#0b57d0"/></svg>
<div class="a pre" style="left:1908.50px;top:487.17px;font:normal 19.25px/19.25px 'Liberation Mono';color:#000;-webkit-text-stroke:0.25px currentColor"><span style="color:#8a0b4e">&lt;/span&gt;</span></div>
<div class="a" style="left:1992.5px;top:485.5px;width:54.3px;height:24px;background:#fff;border:1px solid #a8c7fa;border-radius:12.0px"></div>
<div class="a pre" style="left:2004.10px;top:492.47px;font:normal 13.2px/13.2px 'Liberation Mono';color:#0b57d0;">flex</div>
<div class="a pre" style="left:1536.90px;top:520.37px;font:normal 19.25px/19.25px 'Liberation Mono';color:#000;-webkit-text-stroke:0.25px currentColor"><span style="color:#8a0b4e">&lt;input </span><span style="color:#9f4a10">class</span><span style="color:#8a0b4e">="</span><span style="color:#0a3ea8">k-input-inner</span><span style="color:#8a0b4e">" </span><span style="color:#9f4a10">id</span><span style="color:#8a0b4e">="</span><span style="color:#0a3ea8">k-00011c8a-fe1e-441a-b9bd-af705b55e916</span><span style="color:#8a0b4e">"</span></div>
<div class="a pre" style="left:1536.90px;top:548.87px;font:normal 19.25px/19.25px 'Liberation Mono';color:#000;-webkit-text-stroke:0.25px currentColor"><span style="color:#9f4a10">ng-reflect-events</span><span style="color:#8a0b4e">="</span><span style="color:#0a3ea8">[object Object]</span><span style="color:#8a0b4e">" </span><span style="color:#9f4a10">tabindex</span><span style="color:#8a0b4e">="</span><span style="color:#0a3ea8">0</span><span style="color:#8a0b4e">" </span><span style="color:#9f4a10">title aria-invalid</span><span style="color:#8a0b4e">="</span><span style="color:#0a3ea8">fal</span></div>
<div class="a pre" style="left:1536.90px;top:577.37px;font:normal 19.25px/19.25px 'Liberation Mono';color:#000;-webkit-text-stroke:0.25px currentColor"><span style="color:#0a3ea8">se</span><span style="color:#8a0b4e">" </span><span style="color:#9f4a10">aria-labelledby</span><span style="color:#8a0b4e">="</span><span style="color:#0a3ea8">k-dcab4985-f169-4342-b40a-9e28fa578cbd</span><span style="color:#8a0b4e">"&gt;</span></div>
<div class="a pre" style="left:2252.00px;top:576.07px;font:normal 19.25px/19.25px 'Liberation Mono';color:#a0a0a0;font-style:italic">== <i>$0</i></div>
<div class="a pre" style="left:1536.90px;top:607.27px;font:normal 19.25px/19.25px 'Liberation Mono';color:#000;-webkit-text-stroke:0.25px currentColor"><span style="color:#25752b">&lt;!--bindings={</span></div>
<div class="a pre" style="left:1536.90px;top:635.97px;font:normal 19.25px/19.25px 'Liberation Mono';color:#000;-webkit-text-stroke:0.25px currentColor"><span style="color:#25752b">  "ng-reflect-ng-if": "false"</span></div>
<div class="a pre" style="left:1536.90px;top:665.27px;font:normal 19.25px/19.25px 'Liberation Mono';color:#000;-webkit-text-stroke:0.25px currentColor"><span style="color:#25752b">}--&gt;</span></div>
<div class="a pre" style="left:1536.90px;top:694.07px;font:normal 19.25px/19.25px 'Liberation Mono';color:#000;-webkit-text-stroke:0.25px currentColor"><span style="color:#25752b">&lt;!--bindings={</span></div>
<div class="a pre" style="left:1536.90px;top:722.87px;font:normal 19.25px/19.25px 'Liberation Mono';color:#000;-webkit-text-stroke:0.25px currentColor"><span style="color:#25752b">  "ng-reflect-ng-if": "false"</span></div>
<div class="a pre" style="left:1536.90px;top:752.17px;font:normal 19.25px/19.25px 'Liberation Mono';color:#000;-webkit-text-stroke:0.25px currentColor"><span style="color:#25752b">}--&gt;</span></div>
<div class="a pre" style="left:1539.60px;top:782.47px;font:normal 19.25px/19.25px 'Liberation Mono';color:#000;-webkit-text-stroke:0.25px currentColor"><span style="color:#8a0b4e">&lt;kendo-icon-wrapper </span><span style="color:#9f4a10">innercssclass</span><span style="color:#8a0b4e">="</span><span style="color:#0a3ea8">k-input-validation-icon</span><span style="color:#8a0b4e">" </span><span style="color:#9f4a10">ng-reflect-</span></div>
<div class="a pre" style="left:1539.60px;top:810.67px;font:normal 19.25px/19.25px 'Liberation Mono';color:#000;-webkit-text-stroke:0.25px currentColor"><span style="color:#9f4a10">inner-css-class</span><span style="color:#8a0b4e">="</span><span style="color:#0a3ea8">k-input-validation-icon</span><span style="color:#8a0b4e">" </span><span style="color:#9f4a10">ng-reflect-name</span><span style="color:#8a0b4e">="</span><span style="color:#0a3ea8">check</span><span style="color:#8a0b4e">" </span><span style="color:#9f4a10">ng-</span></div>
<div class="a pre" style="left:1539.60px;top:838.67px;font:normal 19.25px/19.25px 'Liberation Mono';color:#000;-webkit-text-stroke:0.25px currentColor"><span style="color:#9f4a10">reflect-svg-icon</span><span style="color:#8a0b4e">="</span><span style="color:#0a3ea8">[object Object]</span><span style="color:#8a0b4e">" </span><span style="color:#9f4a10">class</span><span style="color:#8a0b4e">="</span><span style="color:#0a3ea8">k-icon-wrapper-host ng-star-in</span></div>
<div class="a pre" style="left:1539.60px;top:867.57px;font:normal 19.25px/19.25px 'Liberation Mono';color:#000;-webkit-text-stroke:0.25px currentColor"><span style="color:#0a3ea8">serted</span><span style="color:#8a0b4e">"&gt;</span></div>
<svg class="a" style="left:1634.5px;top:867.5px;" width="25" height="17.5" viewBox="0 0 25 17.5"><rect x="0.5" y="0.5" width="24" height="16.5" rx="8.25" fill="#fff" stroke="#a8c7fa" stroke-width="1"/><circle cx="7.0" cy="8.75" r="1.7" fill="#0b57d0"/><circle cx="12.5" cy="8.75" r="1.7" fill="#0b57d0"/><circle cx="18.0" cy="8.75" r="1.7" fill="#0b57d0"/></svg>
<div class="a pre" style="left:1661.00px;top:867.57px;font:normal 19.25px/19.25px 'Liberation Mono';color:#000;-webkit-text-stroke:0.25px currentColor"><span style="color:#8a0b4e">&lt;/kendo-icon-wrapper&gt;</span></div>
<div class="a pre" style="left:1536.90px;top:897.27px;font:normal 19.25px/19.25px 'Liberation Mono';color:#000;-webkit-text-stroke:0.25px currentColor"><span style="color:#25752b">&lt;!--bindings={</span></div>
<div class="a pre" style="left:1536.90px;top:925.97px;font:normal 19.25px/19.25px 'Liberation Mono';color:#000;-webkit-text-stroke:0.25px currentColor"><span style="color:#25752b">  "ng-reflect-ng-if": "true"</span></div>
<div class="a pre" style="left:1536.90px;top:954.47px;font:normal 19.25px/19.25px 'Liberation Mono';color:#000;-webkit-text-stroke:0.25px currentColor"><span style="color:#25752b">}--&gt;</span></div>
<svg class="a" style="left:1283px;top:519px;" width="22" height="12" viewBox="0 0 22 12"><circle cx="4" cy="6" r="2.1" fill="#474747"/><circle cx="10.5" cy="6" r="2.1" fill="#474747"/><circle cx="17" cy="6" r="2.1" fill="#474747"/></svg>
<div class="a" style="left:1509.4px;top:306.3px;width:270.3px;height:35px;background:transparent;border:4px solid #21ab4a"></div>
<div class="a" style="left:2317.9px;top:280px;width:55.1px;height:35px;background:transparent;border:4px solid #21ab4a"></div>
<div class="a" style="left:2374px;top:128px;width:15px;height:852px;background:#fafafa;"></div>
<svg class="a" style="left:2373px;top:132px;" width="18" height="14" viewBox="0 0 18 14"><path d="M3 11 L8.5 4.5 L14 11 Z" fill="#9a9a9a"/></svg>
<div class="a" style="left:2376px;top:386px;width:8px;height:268px;background:#8f8f8f;border-radius:4px"></div>
<svg class="a" style="left:2373px;top:962px;" width="18" height="14" viewBox="0 0 18 14"><path d="M3 3 L8.5 9.5 L14 3 Z" fill="#9a9a9a"/></svg>
<div class="a" style="left:2389.5px;top:128px;width:1px;height:852px;background:#c9d7ef;"></div>
<div class="a" style="left:2390.5px;top:128px;width:167.5px;height:57px;background:#eef3fb;"></div>
<div class="a" style="left:2390.5px;top:184.5px;width:167.5px;height:1px;background:#c9d7ef;"></div>
<div class="a pre" style="left:2407.50px;top:147.35px;font:normal 21px/21px 'Liberation Sans';color:#0b57d0;letter-spacing:-0.6px;">Styles</div>
<svg class="a" style="left:2516px;top:140px;" width="24" height="18" viewBox="0 0 24 18"><path d="M3.5 5 L11.5 13 L19.5 5" fill="none" stroke="#333" stroke-width="1.8"/></svg>
<div class="a" style="left:2399.5px;top:191.3px;width:60px;height:34.3px;background:#e9eef6;border-radius:17px"></div>
<svg class="a" style="left:2416px;top:198px;" width="22" height="20" viewBox="0 0 22 20"><path d="M2 3.5 H18 M5 9.5 H15 M8 15.5 H12" stroke="#333" stroke-width="1.7"/></svg>
<div class="a" style="left:2440px;top:191px;width:19px;height:35px;overflow:hidden"><div class="a pre" style="left:8.50px;top:5.95px;font:normal 21px/21px 'Liberation Sans';color:#666;">F</div>
</div>
<div class="a pre" style="left:2472.50px;top:197.57px;font:normal 20.5px/20.5px 'Liberation Sans';color:#333;letter-spacing:-0.9px;-webkit-text-stroke:0.3px #333">:hov</div>
<div class="a" style="left:2515px;top:191px;width:29px;height:35px;overflow:hidden"><div class="a pre" style="left:7.50px;top:6.38px;font:normal 20.5px/20.5px 'Liberation Sans';color:#333;letter-spacing:-0.3px;-webkit-text-stroke:0.3px #333">.cl</div>
</div>
<div class="a" style="left:2390.5px;top:231px;width:155px;height:1px;background:#c9d7ef;"></div>
<div class="a" style="left:0;top:232px;width:2545px;height:789px;overflow:hidden"><div class="a" style="left:0;top:-232px;width:2560px;height:1080px"><div class="a pre" style="left:2398.00px;top:263.76px;font:normal 19px/19px 'Liberation Mono';color:#5a5a5a;-webkit-text-stroke:0.2px currentColor;">element.s</div>
<div class="a pre" style="left:2398.00px;top:287.86px;font:normal 19px/19px 'Liberation Mono';color:#5a5a5a;-webkit-text-stroke:0.2px currentColor;">tyle <span style="color:#202124">{</span></div>
<div class="a pre" style="left:2398.00px;top:313.06px;font:normal 19px/19px 'Liberation Mono';color:#202124;-webkit-text-stroke:0.2px currentColor;">}</div>
<div class="a" style="left:2390.5px;top:341.5px;width:155px;height:1px;background:#c9d7ef;"></div>
<div class="a pre" style="left:2426.00px;top:354.06px;font:normal 19px/19px 'Liberation Mono';color:#303030;-webkit-text-stroke:0.2px currentColor;text-decoration:underline;text-decoration-color:#9a9a9a;text-decoration-thickness:1.6px;text-underline-offset:3px">all.scss…</div>
<div class="a pre" style="left:2398.00px;top:383.86px;font:normal 19px/19px 'Liberation Mono';color:#202124;-webkit-text-stroke:0.2px currentColor;">.k-input-md</div>
<div class="a pre" style="left:2398.00px;top:408.76px;font:normal 19px/19px 'Liberation Mono';color:#202124;-webkit-text-stroke:0.2px currentColor;">.k-input-</div>
<div class="a pre" style="left:2398.00px;top:432.56px;font:normal 19px/19px 'Liberation Mono';color:#202124;-webkit-text-stroke:0.2px currentColor;">inner<span style="color:#777">, .k-</span></div>
<div class="a pre" style="left:2398.00px;top:456.56px;font:normal 19px/19px 'Liberation Mono';color:#777;-webkit-text-stroke:0.2px currentColor;">picker-md</div>
<div class="a pre" style="left:2398.00px;top:480.56px;font:normal 19px/19px 'Liberation Mono';color:#777;-webkit-text-stroke:0.2px currentColor;">.k-input-</div>
<div class="a pre" style="left:2398.00px;top:504.56px;font:normal 19px/19px 'Liberation Mono';color:#777;-webkit-text-stroke:0.2px currentColor;">inner <span style="color:#202124">{</span></div>
<div class="a pre" style="left:2429.30px;top:531.66px;font:normal 19px/19px 'Liberation Mono';color:#d93636;-webkit-text-stroke:0.2px currentColor;">padding-</div>
<div class="a pre" style="left:2464.30px;top:555.16px;font:normal 19px/19px 'Liberation Mono';color:#d93636;-webkit-text-stroke:0.2px currentColor;">block</div>
<div class="a pre" style="left:2464.30px;top:579.36px;font:normal 19px/19px 'Liberation Mono';color:#202124;-webkit-text-stroke:0.2px currentColor;">:</div>
<svg class="a" style="left:2487px;top:583.8px;" width="9.5" height="11.5" viewBox="0 0 9.5 11.5"><path d="M1.2 1.2 L8.3 5.75 L1.2 10.3 Z" fill="#474747" stroke="#474747" stroke-width="2.4" stroke-linejoin="round"/></svg>
<div class="a pre" style="left:2464.30px;top:603.16px;font:normal 19px/19px 'Liberation Mono';color:#202124;-webkit-text-stroke:0.2px currentColor;">0.375re</div>
<div class="a pre" style="left:2429.30px;top:627.56px;font:normal 19px/19px 'Liberation Mono';color:#d93636;-webkit-text-stroke:0.2px currentColor;">padding-</div>
<div class="a pre" style="left:2464.30px;top:651.16px;font:normal 19px/19px 'Liberation Mono';color:#d93636;-webkit-text-stroke:0.2px currentColor;">inline</div>
<div class="a pre" style="left:2464.30px;top:675.36px;font:normal 19px/19px 'Liberation Mono';color:#202124;-webkit-text-stroke:0.2px currentColor;">:</div>
<svg class="a" style="left:2487px;top:679.2px;" width="9.5" height="11.5" viewBox="0 0 9.5 11.5"><path d="M1.2 1.2 L8.3 5.75 L1.2 10.3 Z" fill="#474747" stroke="#474747" stroke-width="2.4" stroke-linejoin="round"/></svg>
<div class="a pre" style="left:2464.30px;top:699.16px;font:normal 19px/19px 'Liberation Mono';color:#202124;-webkit-text-stroke:0.2px currentColor;">0.75rem</div>
<div class="a pre" style="left:2398.00px;top:723.56px;font:normal 19px/19px 'Liberation Mono';color:#202124;-webkit-text-stroke:0.2px currentColor;">}</div>
<div class="a" style="left:2390.5px;top:749.5px;width:155px;height:1px;background:#c9d7ef;"></div>
<div class="a pre" style="left:2426.00px;top:761.76px;font:normal 19px/19px 'Liberation Mono';color:#303030;-webkit-text-stroke:0.2px currentColor;text-decoration:underline;text-decoration-color:#9a9a9a;text-decoration-thickness:1.6px;text-underline-offset:3px">all.scss…</div>
<div class="a pre" style="left:2398.00px;top:791.56px;font:normal 19px/19px 'Liberation Mono';color:#202124;-webkit-text-stroke:0.2px currentColor;">.k-input-</div>
<div class="a pre" style="left:2398.00px;top:816.56px;font:normal 19px/19px 'Liberation Mono';color:#202124;-webkit-text-stroke:0.2px currentColor;">inner {</div>
<div class="a pre" style="left:2429.30px;top:843.56px;font:normal 19px/19px 'Liberation Mono';color:#d93636;-webkit-text-stroke:0.2px currentColor;text-decoration:line-through;text-decoration-color:#202124;text-decoration-thickness:1.6px">padding-</div>
<div class="a pre" style="left:2464.30px;top:867.36px;font:normal 19px/19px 'Liberation Mono';color:#d93636;-webkit-text-stroke:0.2px currentColor;text-decoration:line-through;text-decoration-color:#202124;text-decoration-thickness:1.6px">block</div>
<div class="a pre" style="left:2464.30px;top:891.06px;font:normal 19px/19px 'Liberation Mono';color:#202124;-webkit-text-stroke:0.2px currentColor;">:</div>
<svg class="a" style="left:2463px;top:891px;" width="36" height="16" viewBox="0 0 36 16"><path d="M1 9 H26" stroke="#202124" stroke-width="1.6"/><path d="M24 2.5 L34 9 L24 15.5 Z" fill="#333"/></svg>
<div class="a pre" style="left:2464.30px;top:914.76px;font:normal 19px/19px 'Liberation Mono';color:#202124;-webkit-text-stroke:0.2px currentColor;text-decoration:line-through;text-decoration-color:#202124;text-decoration-thickness:1.6px">0.375re</div>
<div class="a pre" style="left:2429.30px;top:939.36px;font:normal 19px/19px 'Liberation Mono';color:#d93636;-webkit-text-stroke:0.2px currentColor;text-decoration:line-through;text-decoration-color:#202124;text-decoration-thickness:1.6px">padding-</div>
<div class="a pre" style="left:2464.30px;top:963.16px;font:normal 19px/19px 'Liberation Mono';color:#d93636;-webkit-text-stroke:0.2px currentColor;text-decoration:line-through;text-decoration-color:#202124;text-decoration-thickness:1.6px">inline</div>
<div class="a pre" style="left:2464.30px;top:986.96px;font:normal 19px/19px 'Liberation Mono';color:#202124;-webkit-text-stroke:0.2px currentColor;">:</div>
<svg class="a" style="left:2463px;top:987px;" width="36" height="16" viewBox="0 0 36 16"><path d="M1 9 H26" stroke="#202124" stroke-width="1.6"/><path d="M24 2.5 L34 9 L24 15.5 Z" fill="#333"/></svg>
<div class="a pre" style="left:2464.30px;top:1010.76px;font:normal 19px/19px 'Liberation Mono';color:#202124;-webkit-text-stroke:0.2px currentColor;text-decoration:line-through;text-decoration-color:#202124;text-decoration-thickness:1.6px">0.75rem</div>
</div></div>
<div class="a" style="left:2545px;top:232px;width:13px;height:789px;background:#f8f8f8;"></div>
<svg class="a" style="left:2544px;top:192px;" width="16" height="12" viewBox="0 0 16 12"><path d="M2 10 L7.5 3.5 L13 10 Z" fill="#9a9a9a"/></svg>
<div class="a" style="left:2547px;top:207px;width:9px;height:30px;background:#8f8f8f;border-radius:4.5px"></div>
<svg class="a" style="left:2544px;top:1003px;" width="16" height="12" viewBox="0 0 16 12"><path d="M2 2 L7.5 8.5 L13 2 Z" fill="#9a9a9a"/></svg>
<div class="a" style="left:1281px;top:980.5px;width:1108px;height:41px;background:#ffffff;"></div>
<div class="a" style="left:1281px;top:980px;width:1108px;height:1px;background:#c9d7ef;"></div>
<div class="a" style="left:1729.2px;top:981px;width:617.3px;height:40.5px;background:#d3e3fd;"></div>
<div class="a" style="left:1322px;top:981px;width:407px;height:40px;overflow:hidden"><div class="a pre" style="left:-4.20px;top:10.19px;font:normal 21.9px/21.9px 'Liberation Sans';color:#404040;letter-spacing:0.0px;">.k-input-solid.ng-touched.ng-dirty.ng-valid</div>
</div>
<div class="a pre" style="left:1741.90px;top:991.50px;font:normal 21.3px/21.3px 'Liberation Sans';color:#404040;letter-spacing:0.0px;"><span style="color:#8a0b4e">input</span>#k-00011c8a-fe1e-441a-b9bd-af705b55e916.k-input-inner</div>
<div class="a" style="left:1282.3px;top:982.3px;width:39.4px;height:38.1px;background:#fff;border:1px solid #c8c8c8"></div>
<svg class="a" style="left:1296px;top:992px;" width="12" height="14" viewBox="0 0 12 14"><path d="M10 1 L2 7 L10 13 Z" fill="#202124"/></svg>
<div class="a" style="left:2348px;top:982.3px;width:40.6px;height:38.1px;background:#fff;border:1px solid #dcdcdc"></div>
<svg class="a" style="left:2363px;top:992px;" width="12" height="14" viewBox="0 0 12 14"><path d="M2 1 L10 7 L2 13 Z" fill="#6b6b6b"/></svg>
<div class="a" style="left:1281px;top:1021.5px;width:1277px;height:48px;background:#edf1f9;"></div>
<div class="a" style="left:1281px;top:1021px;width:1277px;height:1px;background:#c9d7ef;"></div>
<div class="a" style="left:1281px;top:1069px;width:1277px;height:1px;background:#c9d7ef;"></div>
<div class="a" style="left:1281px;top:1070px;width:1277px;height:10px;background:#ffffff;"></div>
<div class="a pre" style="left:1298.60px;top:1041.35px;font:normal 21px/21px 'Liberation Sans';color:#0b57d0;letter-spacing:-0.5px;">Console</div>
<div class="a pre" style="left:1407.00px;top:1041.35px;font:normal 21px/21px 'Liberation Sans';color:#3c3c3c;letter-spacing:-0.9px;">Issues</div>
<svg class="a" style="left:1486px;top:1031px;" width="32" height="30" viewBox="0 0 32 30"><path d="M15.5 2.5 V26.5 M3.5 14.5 H27.5" stroke="#3c3c3c" stroke-width="1.7"/></svg>
<svg class="a" style="left:2460px;top:1030px;" width="36" height="32" viewBox="0 0 36 32"><path d="M9 9 Q4 10.5 4 16 Q4 20 7.5 22 M4 8 L9 9 L8 13.5" fill="none" stroke="#3c3c3c" stroke-width="1.6"/><rect x="11" y="12.5" width="19" height="16" rx="1" fill="none" stroke="#3c3c3c" stroke-width="1.6" stroke-dasharray="3 2"/><path d="M11 20 H30" stroke="#3c3c3c" stroke-width="1.6"/></svg>
<svg class="a" style="left:2508px;top:1031px;" width="36" height="32" viewBox="0 0 36 32"><rect x="2.5" y="3.5" width="29" height="24" rx="2.5" fill="none" stroke="#3c3c3c" stroke-width="1.6"/><path d="M3 20 H31 M17 17 V8.5 M13 12.5 L17 8.5 L21 12.5" fill="none" stroke="#3c3c3c" stroke-width="1.6"/></svg>
<div class="a" style="left:1281px;top:1079px;width:1279px;height:1px;background:#5c5c5c;"></div>
</body></html>
